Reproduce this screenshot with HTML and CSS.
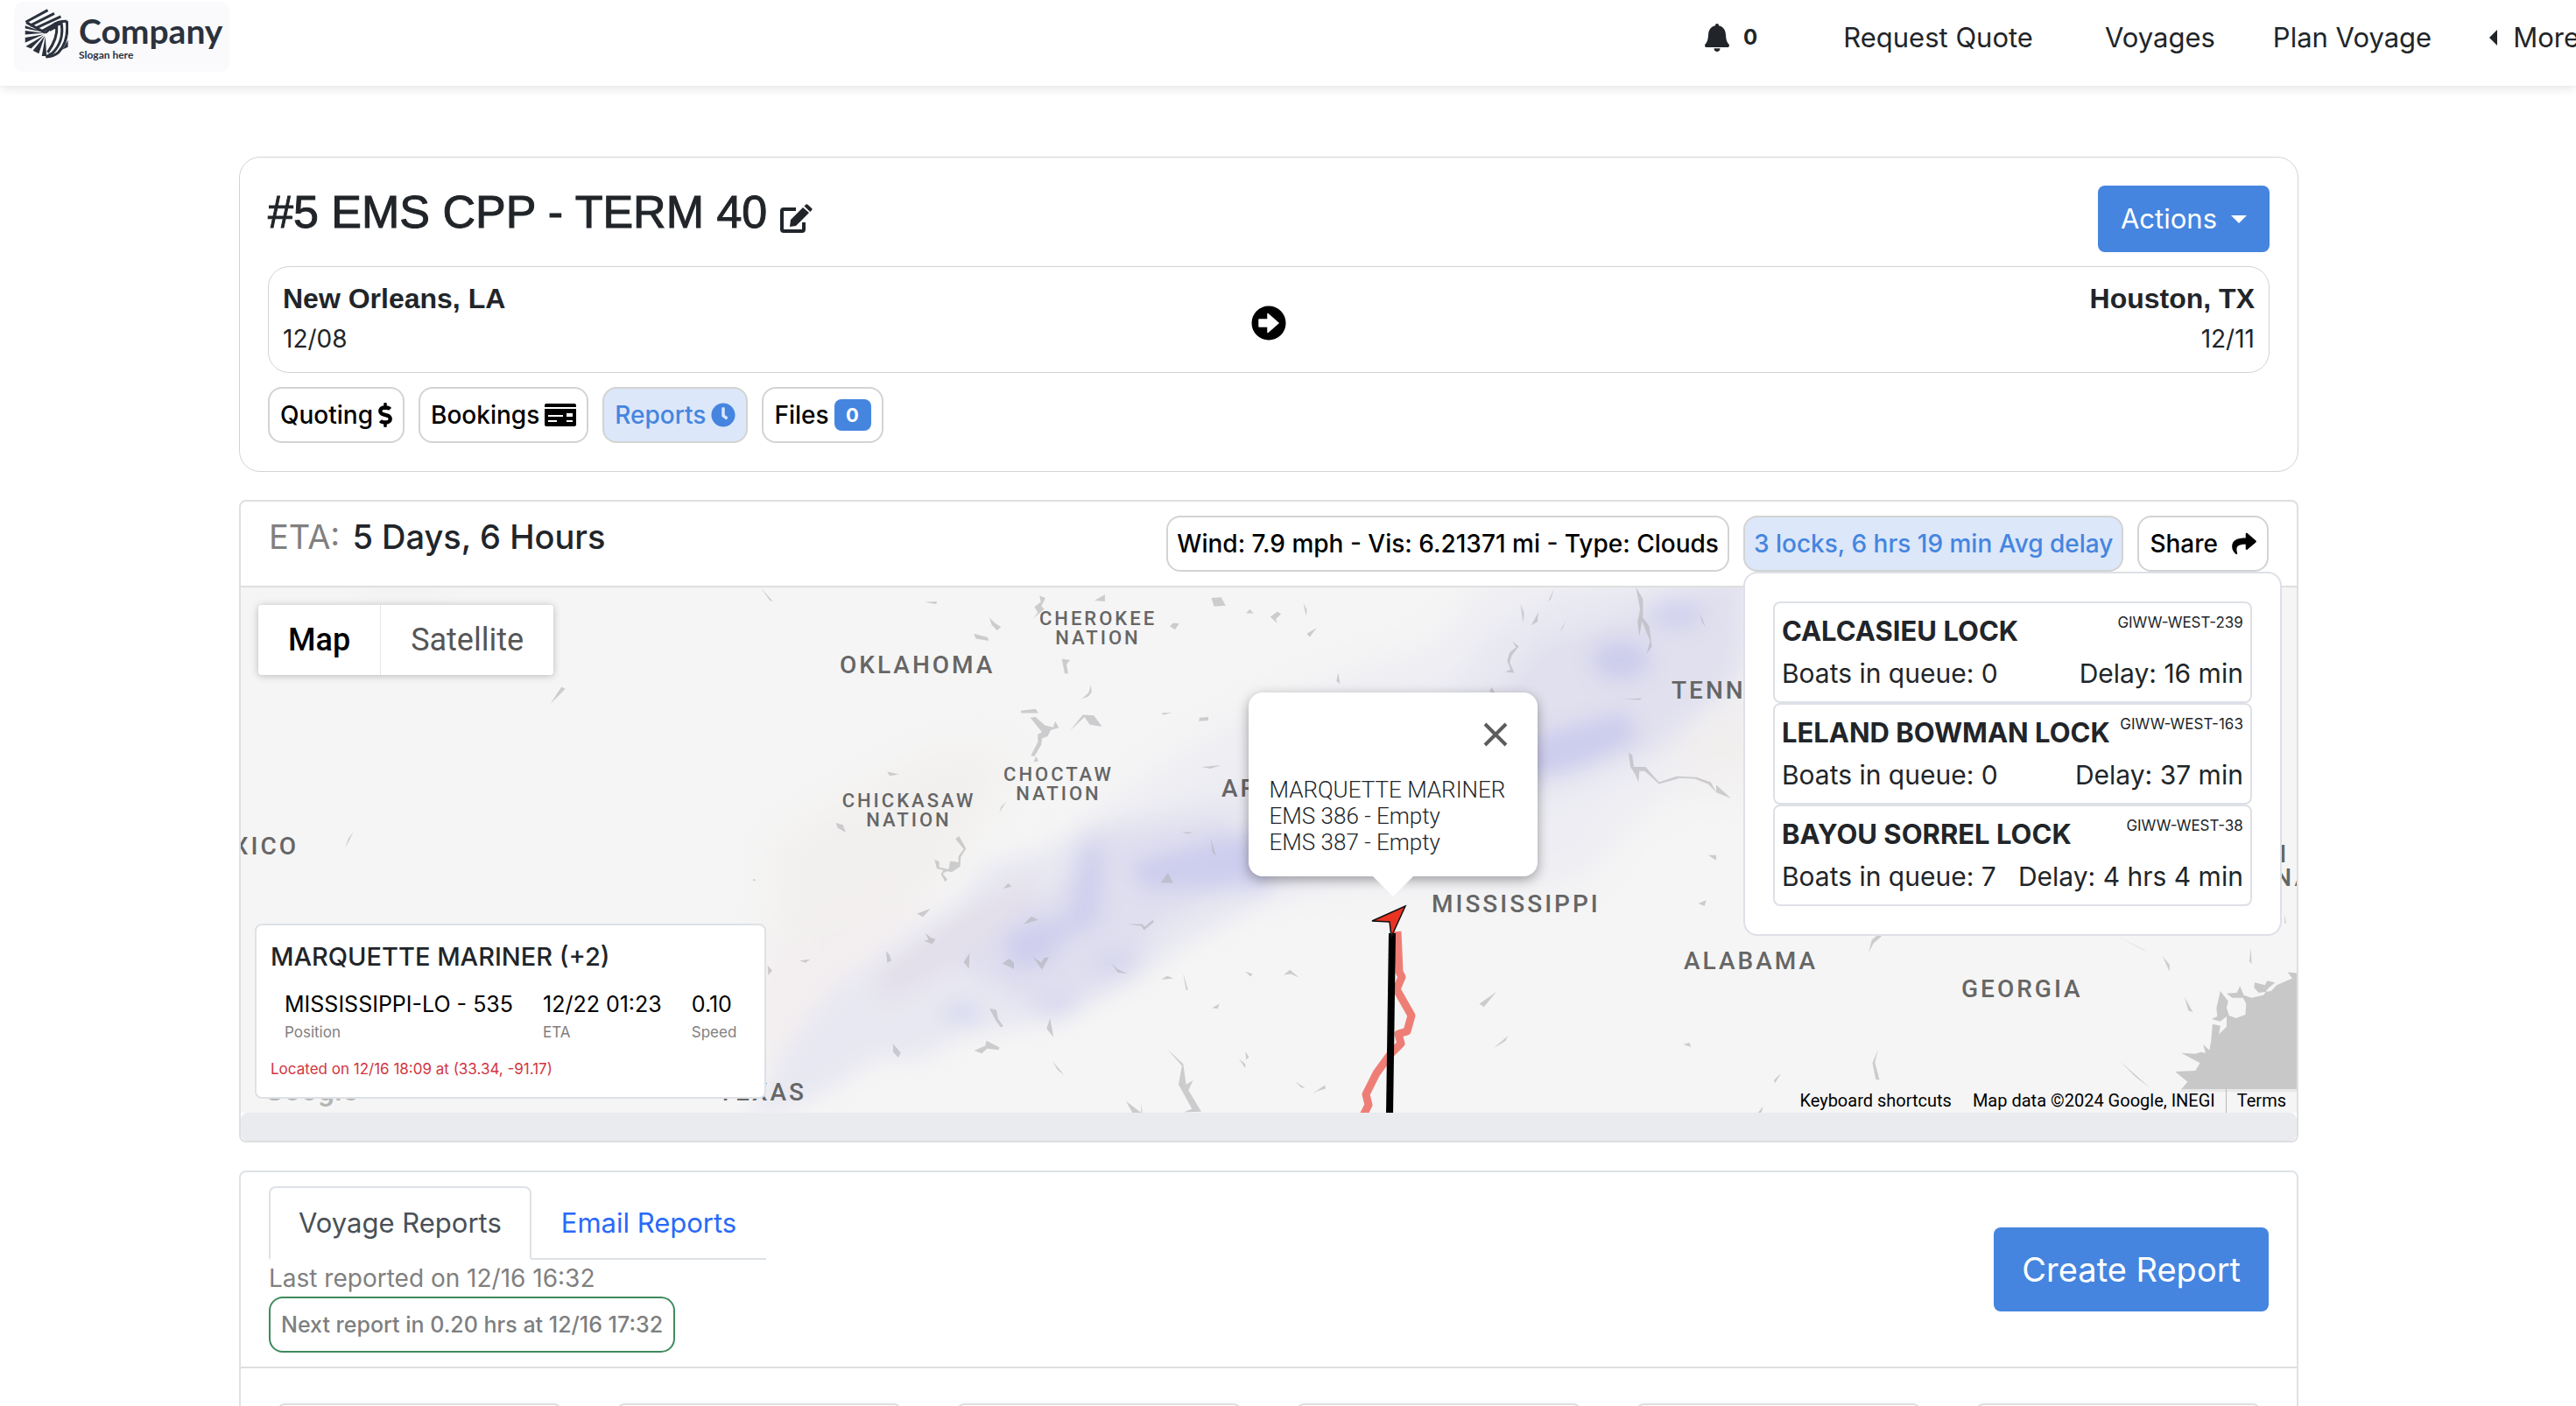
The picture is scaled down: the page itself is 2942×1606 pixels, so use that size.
FILE: index.html
```html
<!DOCTYPE html>
<html lang="en">
<head>
<meta charset="utf-8">
<meta name="viewport" content="width=device-width, initial-scale=1">
<title>#5 EMS CPP - TERM 40</title>
<link rel="stylesheet" href="styles.css">
</head>
<body>
<header class="topbar">
  <a class="brand" href="#" aria-label="Company">
    <svg class="brand-mark" viewBox="38 31 147 168" aria-hidden="true">
      <g fill="none" stroke="#2b323d" stroke-width="9">
        <path d="M42 76 116 36M44 77 108 112M56 88 138 47M74 97 160 57M94 108 130 88 Q150 72 180 73"/>
        <path d="M180 72 Q188 140 152 178 Q136 192 110 193"/>
        <path d="M108 112 Q136 84 162 80 Q172 140 132 180 L110 193"/>
        <path d="M122 103 Q136 94 146 92 Q150 130 116 178"/>
      </g>
      <g fill="#2b323d">
        <path d="M40 88 102 110 40 97zM40 105 102 113 40 118zM40 128 102 117 40 145zM42 158 104 120 60 165zM66 172 106 122 86 182zM96 190 108 124 112 190zM184 136V160L166 168z"/>
      </g>
    </svg>
    <span class="brand-text"><span class="brand-name">Company</span><span class="brand-slogan">Slogan here</span></span>
  </a>
  <nav class="nav" aria-label="Main">
    <a class="nav-bell" href="#" aria-label="Notifications">
      <svg width="28" height="32" viewBox="0 0 28 32" aria-hidden="true"><path fill="currentColor" d="M14 0c1.300 0 2 .9 2 2.300 5 1.200 7.500 4.700 7.900 9.700.5 6 .9 8.500 3.600 11.500.9 1.200.4 3.500-1.500 3.500H2c-1.900 0-2.400-2.300-1.500-3.500 2.700-3 3.100-5.500 3.600-11.500.4-5 2.900-8.500 7.900-9.700C12 .9 12.700 0 14 0zM10.500 28.200h7c0 2.200-1.500 3.800-3.500 3.800s-3.500-1.600-3.500-3.800z"/></svg>
      <span>0</span>
    </a>
    <a class="nav-quote" href="#">Request Quote</a>
    <a href="#">Voyages</a>
    <a href="#">Plan Voyage</a>
    <a class="nav-more" href="#">More</a>
  </nav>
</header>

<main class="page">
  <section class="voyage">
    <div class="voyage-head">
      <h1 class="voyage-title">#5 EMS CPP - TERM 40
        <svg width="37" height="33" viewBox="0 0 37 33" aria-hidden="true"><path fill="none" stroke="currentColor" stroke-width="4" stroke-linejoin="round" d="M18 6H4Q2 6 2 8V29Q2 31 4 31H25Q27 31 27 29V21"/><path fill="currentColor" d="M11 26 12 18 26 4 33 10 18 25zM27.500 2.500 29.500.6Q30.500 0 31.500.7L36.200 5Q37 6 36.200 7L34.300 9z"/></svg>
      </h1>
      <button class="btn btn-actions" type="button">Actions</button>
    </div>
    <div class="route">
      <div><div class="port">New Orleans, LA</div><div class="port-date">12/08</div></div>
      <svg class="route-arrow" width="40" height="40" viewBox="0 0 40 40" aria-hidden="true"><circle cx="20" cy="20" r="19.500"/><path fill="#fff" stroke="#fff" stroke-width="1.500" stroke-linejoin="round" d="M9 16H19V9.500L31 20 19 30.500V24H9z"/></svg>
      <div class="route-end"><div class="port">Houston, TX</div><div class="port-date">12/11</div></div>
    </div>
    <div class="chips">
      <button class="chip" type="button">Quoting
        <svg width="16" height="28" viewBox="0 0 288 512" aria-hidden="true"><path fill="currentColor" d="M209.200 233.400l-108-31.600C88.700 198.200 80 186.500 80 173.500c0-16.300 13.200-29.500 29.500-29.500h66.300c12.200 0 24.200 3.700 34.200 10.500 6.100 4.100 14.300 3.100 19.500-2l34.800-34c7.100-6.900 6.100-18.400-1.800-24.500C238 74.800 207.400 64.100 176 64V16c0-8.800-7.200-16-16-16h-32c-8.800 0-16 7.200-16 16v48h-2.500C45.800 64-5.400 118.700.5 183.600c4.200 46.100 39.400 83.600 83.800 96.600l102.500 30c12.500 3.700 21.200 15.300 21.200 28.300 0 16.300-13.200 29.500-29.500 29.500h-66.300C100 368 88 364.300 78 357.500c-6.100-4.100-14.300-3.100-19.500 2l-34.800 34c-7.100 6.900-6.100 18.400 1.800 24.500 24.500 19.200 55.100 29.900 86.500 30v48c0 8.800 7.200 16 16 16h32c8.800 0 16-7.200 16-16v-48.200c46.600-.9 90.300-28.600 105.700-72.700 21.500-61.600-14.600-124.800-72.500-141.700z"/></svg>
      </button>
      <button class="chip" type="button">Bookings
        <svg width="36" height="26" viewBox="0 0 36 26" aria-hidden="true"><path fill="currentColor" fill-rule="evenodd" d="M0 2Q0 0 2 0H34Q36 0 36 2V4H0zM0 6H36V24Q36 26 34 26H2Q0 26 0 24zM4 13V15H21V13zM4 19V21H14V19zM25 11V15H32V11zM25 19V21H32V19z"/></svg>
      </button>
      <button class="chip chip-active" type="button">Reports
        <svg width="28" height="28" viewBox="0 0 512 512" aria-hidden="true"><path fill="currentColor" d="M256,8C119,8,8,119,8,256S119,504,256,504,504,393,504,256,393,8,256,8Zm92.490,313h0l-20,25a16,16,0,0,1-22.490,2.500h0l-67-49.720a40,40,0,0,1-15-31.230V112a16,16,0,0,1,16-16h32a16,16,0,0,1,16,16V256l58,42.500A16,16,0,0,1,348.490,321Z"/></svg>
      </button>
      <button class="chip" type="button">Files <span class="badge">0</span></button>
    </div>
  </section>

  <section class="card">
    <div class="map-head">
      <h2 class="eta"><span class="eta-label">ETA:</span> 5 Days, 6 Hours</h2>
      <div class="map-tools">
        <button class="chip" type="button">Wind: 7.9 mph - Vis: 6.21371 mi - Type: Clouds</button>
        <div class="dropdown">
          <button class="chip chip-active" type="button" aria-expanded="true">3 locks, 6 hrs 19 min Avg delay</button>
          <div class="locks">
            <article class="lock">
              <div class="lock-row"><strong>CALCASIEU LOCK</strong><small>GIWW-WEST-239</small></div>
              <div class="lock-row"><span>Boats in queue: 0</span><span>Delay: 16 min</span></div>
            </article>
            <article class="lock">
              <div class="lock-row"><strong>LELAND BOWMAN LOCK</strong><small>GIWW-WEST-163</small></div>
              <div class="lock-row"><span>Boats in queue: 0</span><span>Delay: 37 min</span></div>
            </article>
            <article class="lock">
              <div class="lock-row"><strong>BAYOU SORREL LOCK</strong><small>GIWW-WEST-38</small></div>
              <div class="lock-row"><span>Boats in queue: 7</span><span>Delay: 4 hrs 4 min</span></div>
            </article>
          </div>
        </div>
        <button class="chip chip-share" type="button">Share
          <svg width="28" height="26" viewBox="0 16 512 480" aria-hidden="true"><path fill="currentColor" d="M503.691 189.836L327.687 37.851C312.281 24.546 288 35.347 288 56.015v80.053C127.371 137.907 0 170.100 0 322.326c0 61.441 39.581 122.309 83.333 154.132 13.653 9.931 33.111-2.533 28.077-18.631C66.066 312.814 132.917 274.316 288 272.085V360c0 20.700 24.300 31.453 39.687 18.164l176.004-152c11.071-9.562 11.086-26.753 0-36.328z"/></svg>
        </button>
      </div>
    </div>

    <div class="map">
      <svg class="map-canvas" viewBox="275 671 2348 600" preserveAspectRatio="xMidYMin slice" role="img" aria-label="Map of the southern United States">
        <defs>
          <filter id="soft" x="-30%" y="-30%" width="160%" height="160%"><feGaussianBlur stdDeviation="12"/></filter>
          <filter id="wide" x="-30%" y="-30%" width="160%" height="160%"><feGaussianBlur stdDeviation="24"/></filter>
        </defs>
        <rect x="275" y="671" width="2348" height="600" fill="#f5f5f5"/>
        <g filter="url(#wide)">
          <path fill="#f2f0ee" d="M880 960 1060 860 1160 850 1120 950 1030 1060 940 1180 880 1130z"/>
          <path fill="#f3eef0" d="M860 1090 980 1050 1080 1000 1040 1080 960 1150 920 1230 860 1230z"/>
          <ellipse cx="460" cy="680" rx="50" ry="12" fill="#f2eeee"/>
          <path fill="#ededf3" d="M1250 930 1400 830 1540 770 1640 740 1700 660 2010 640 2010 860 1880 920 1800 1010 1500 1010 1290 1040z"/>
          <path fill="#f1eeee" d="M1900 830 2020 790 2020 900 1920 900z"/>
        </g>
        <g filter="url(#soft)">
          <path fill="#e8e8f2" d="M850 1285 900 1194 950 1130 1010 1087 1093 1030 1130 985 1193 970 1240 940 1300 930 1390 910 1560 870 1650 800 1700 730 1780 680 1960 650 2010 740 1910 850 1840 890 1640 965 1460 1020 1345 1085 1300 1120 1210 1165 1100 1185 1050 1210 1000 1210 940 1250z"/>
          <path fill="#e0dfef" d="M1080 1090 1140 1060 1220 1000 1240 950 1400 930 1430 1000 1320 1060 1300 1105 1200 1165 1100 1110z"/>
          <path fill="#e3dfea" d="M1000 1110 1100 1040 1180 1000 1180 1030 1080 1110 1010 1150z"/>
          <path fill="#e1e0ee" d="M1700 800 1760 730 1860 700 2000 650 1980 780 1880 860 1760 890z"/>
          <ellipse cx="1208" cy="1148" rx="20" ry="14" fill="#d8d8ef"/>
          <ellipse cx="1273" cy="1099" rx="26" ry="11" fill="#d4d4ee"/>
          <ellipse cx="1098" cy="1156" rx="22" ry="10" fill="#d3d4ef"/>
          <path fill="#cfcfee" d="M1142 1072 1172 1054 1220 1046 1235 966 1262 966 1256 1054 1214 1074 1197 1102 1156 1110z"/>
          <path fill="#cdcdee" d="M1290 985 1400 955 1450 950 1450 1014 1305 1016z"/>
          <path fill="#cccced" d="M1735 862 1760 838 1858 812 1870 845 1802 878 1742 894z"/>
          <ellipse cx="1851" cy="754" rx="34" ry="23" fill="#cccced"/>
          <ellipse cx="1915" cy="702" rx="32" ry="17" fill="#d1d1ef"/>
        </g>
        <g fill="#b3b3b8" fill-opacity=".62">
          <path transform="translate(860 660) scale(.3333 .3954)" d="M26 28 68 68 58 66zM588 70 630 68 628 76zM810 115 828 130 850 142 836 152 818 136zM756 161 804 172 808 182 764 176zM982 52 1002 58 988 82 998 90 960 118 976 100 964 84 986 70zM1170 66 1206 48 1206 68zM1440 130 1460 132 1446 150 1428 140zM1058 234 1086 238 1074 250 1080 276 1068 276zM1158 310 1160 330 1150 342 1126 350 1150 332zM918 384 968 379 978 391 918 391zM950 404 968 402 1000 426 1028 432 1036 415 1048 433 1020 440 1010 458 990 464 988 482 964 516 952 514 976 474 976 452 990 446zM962 532 970 515 978 530zM1086 442 1130 396 1168 398 1196 430 1154 424 1136 402zM1400 390 1436 390 1406 396zM1530 404 1560 402 1560 412 1528 414zM460 560 500 568 468 572zM844 678 850 662 868 646zM284 708 308 714 318 736 290 722zM694 754 706 746 730 782 712 806 710 834 682 850 664 848 650 854 666 872 658 878 644 856 652 844 630 840 622 814 638 820 638 836 670 842 676 818 704 822 704 804 722 784zM0 870 12 873 0 876zM858 898 874 882 886 892zM562 970 608 956 582 980zM928 1000 954 978 978 988zM590 1026 610 1040 626 1044 614 1058 586 1048 602 1046zM456 1078 468 1090 474 1106 460 1112zM742 1084 740 1130 722 1110zM854 1114 878 1100 894 1112 894 1130zM958 1094 988 1112 996 1098 1014 1096 990 1132zM1226 1112 1248 1130 1284 1144 1250 1140zM1286 1000 1334 1000 1342 1008 1370 988 1374 994 1340 1018 1330 1006zM1398 880 1422 852 1440 882zM1468 734 1508 736 1490 740zM1398 1160 1420 1150 1440 1158zM1474 1142 1490 1190 1484 1192zM160 1106 196 1102 180 1112zM50 1120 66 1134 52 1148zM810 1244 834 1248 840 1274 858 1296 848 1298 830 1276zM1018 1272 1030 1328 1006 1302zM758 1366 796 1352 800 1337 844 1356 842 1364 802 1360 784 1374zM480 1346 506 1372 498 1386 480 1370zM1026 1396 1066 1436 1044 1422zM1420 1362 1474 1404 1484 1464 1508 1452 1492 1480 1536 1542 1476 1544 1504 1534 1478 1494 1458 1464 1470 1410zM1278 1512 1330 1545 1330 1516 1334 1545 1300 1545z"/>
          <path transform="translate(1160 560) scale(.5102 .4847)" d="M438 254 460 252 470 272 444 274zM516 290 524 280 532 290zM570 298 586 286 594 292 582 304 586 314zM644 266 652 282 650 296zM652 338 674 324 658 346zM718 450 722 430 726 456zM1130 268 1138 290 1136 314zM1154 318 1170 288 1168 310zM1218 332 1232 308 1224 326zM1192 262 1206 230 1198 256zM1388 228 1404 256 1404 300 1418 320 1424 368 1412 386 1420 356 1402 308 1396 344 1392 310 1398 280zM1532 290 1544 322 1536 310zM1112 356 1126 368 1110 390 1106 406 1116 430 1096 428 1108 422 1100 402 1106 382 1120 370zM1060 474 1066 464 1074 480zM1360 492 1400 490 1398 494zM1372 618 1380 624 1384 652 1410 652 1440 688 1480 674 1524 676 1556 688 1568 712 1550 692 1520 680 1486 678 1440 692 1408 662 1396 662 1394 688 1386 668 1376 652zM1550 860 1568 860 1568 872zM416 652 460 648 436 656zM1038 1210 1076 1182 1048 1218zM1070 1314 1102 1286 1096 1298zM1494 1306 1508 1302 1512 1312zM1528 974 1546 966 1542 980zM600 1142 614 1130 634 1148 616 1140zM514 1134 530 1140 526 1146zM440 1220 456 1210 452 1222zM500 1340 514 1352 514 1362zM514 1322 522 1336 516 1342zM626 1394 648 1408 640 1408zM664 1422 692 1402 694 1410 676 1416zM436 818 448 862 440 852z"/>
          <path transform="translate(1960 560) scale(.4464 .4847)" d="M0 694 38 726 0 712zM390 1090 398 1060 410 1050 424 1050 402 1068zM1024 1050 1102 1086 1090 1082zM1142 1098 1160 1118 1160 1134zM1364 1110 1368 1078 1370 1116zM1454 1020 1454 1000 1458 1020zM1198 1194 1220 1230 1208 1226zM414 1318 406 1348 418 1390 408 1388 400 1350zM148 1390 166 1374 150 1398zM1034 1346 1110 1408 1072 1382zM106 1468 120 1452 116 1466z"/>
          <path transform="translate(260 560) scale(.574 .3333)" d="M642 732 664 674 672 680zM234 1225 240 1195 250 1170 242 1200zM1026 1580 1052 1572 1034 1588z"/>
        </g>
        <path fill="#c8c8c8" transform="translate(1960 560) scale(.4464 .4847)" d="M1488 1138 1462 1136 1474 1150 1434 1166 1420 1180 1388 1184 1376 1172 1378 1160 1404 1166 1410 1156 1430 1160 1412 1174 1400 1190 1370 1196 1350 1190 1340 1168 1332 1184 1306 1186 1320 1196 1348 1196 1356 1210 1354 1236 1330 1244 1312 1238 1306 1220 1310 1204 1290 1180 1280 1220 1282 1240 1268 1246 1290 1252 1306 1240 1306 1264 1286 1282 1290 1262 1270 1258 1266 1300 1262 1320 1246 1306 1252 1326 1240 1324 1226 1328 1190 1326 1238 1350 1226 1368 1174 1370 1206 1394 1184 1418 1488 1418z"/>
        <g class="state">
          <text x="959" y="769">OKLAHOMA</text>
          <text x="1395" y="910">ARKANSAS</text>
          <text x="1635" y="1042">MISSISSIPPI</text>
          <text x="1909" y="798">TENNESSEE</text>
          <text x="1923" y="1107">ALABAMA</text>
          <text x="2240" y="1139">GEORGIA</text>
          <text x="341" y="976" text-anchor="end">NEW MEXICO</text>
          <text x="921" y="1257" text-anchor="end">TEXAS</text>
          <text x="2614" y="985" text-anchor="end">SOUTH</text>
          <text x="2642" y="1012" text-anchor="end">CAROLINA</text>
        </g>
        <g class="nation">
          <text x="1254" y="714">CHEROKEE</text><text x="1254" y="736">NATION</text>
          <text x="1209" y="892">CHOCTAW</text><text x="1209" y="914">NATION</text>
          <text x="1038" y="922">CHICKASAW</text><text x="1038" y="944">NATION</text>
        </g>
        <text class="map-logo" x="301" y="1257">Google</text>
        <path fill="none" stroke="#ee7e75" stroke-width="9" stroke-linejoin="round" d="M1596 1064 1598 1110 1601 1116 1595 1130 1612 1160 1607 1178 1597 1181 1600 1192 1588 1204 1572 1226 1560 1250 1563 1262 1557 1274"/>
        <path fill="none" stroke="#000" stroke-width="8" d="M1590 1066 1587 1274"/>
        <path fill="#ea3323" stroke="#111" stroke-width="1.500" d="M1605 1035 1567 1052 1587 1053 1589 1070z"/>
      </svg>

      <div class="map-types">
        <button class="map-type map-type-on" type="button">Map</button>
        <button class="map-type" type="button">Satellite</button>
      </div>

      <div class="bubble">
        <button class="bubble-close" type="button" aria-label="Close"><svg width="28" height="28" viewBox="0 0 28 28" aria-hidden="true"><path fill="none" stroke="#5c5c5c" stroke-width="4" d="M2 2 26 26M26 2 2 26"/></svg></button>
        <div>MARQUETTE MARINER</div>
        <div>EMS 386 - Empty</div>
        <div>EMS 387 - Empty</div>
      </div>

      <aside class="vessel">
        <h3 class="vessel-name">MARQUETTE MARINER (+2)</h3>
        <dl class="facts">
          <div><dd>MISSISSIPPI-LO - 535</dd><dt>Position</dt></div>
          <div><dd>12/22 01:23</dd><dt>ETA</dt></div>
          <div><dd>0.10</dd><dt>Speed</dt></div>
        </dl>
        <p class="located">Located on 12/16 18:09 at (33.34, -91.17)</p>
      </aside>

      <div class="credits">
        <button type="button">Keyboard shortcuts</button>
        <span>Map data ©2024 Google, INEGI</span>
        <a href="#">Terms</a>
      </div>
    </div>
    <div class="map-foot"></div>
  </section>

  <section class="card reports">
    <div class="reports-head">
      <div class="reports-info">
        <div class="tabs">
          <a class="tab tab-on" href="#">Voyage Reports</a>
          <a class="tab" href="#">Email Reports</a>
        </div>
        <p class="last">Last reported on 12/16 16:32</p>
        <div class="next">Next report in 0.20 hrs at 12/16 17:32</div>
      </div>
      <button class="btn btn-create" type="button">Create Report</button>
    </div>
    <div class="stats">
      <div class="stat"></div><div class="stat"></div><div class="stat"></div>
      <div class="stat"></div><div class="stat"></div><div class="stat"></div>
    </div>
  </section>
</main>
</body>
</html>
```
FILE: styles.css
```css
* { box-sizing: border-box; }

body {
  margin: 0;
  height: 100vh;
  overflow: hidden;
  background: #fff;
  color: #212529;
  font: 400 31px/48px Inter, "Liberation Sans", sans-serif;
}

h1, h2, h3, p, dl, dd { margin: 0; }
a { color: inherit; text-decoration: none; }
button { font: inherit; cursor: pointer; }
svg { flex: none; }

/* Top bar */
.topbar {
  display: flex;
  align-items: flex-start;
  justify-content: space-between;
  height: 98px;
  padding: 2px 0 0 16px;
  box-shadow: 0 2px 12px rgba(0, 0, 0, .12);
}
.brand {
  display: flex;
  align-items: flex-start;
  gap: 12px;
  width: 246px;
  height: 80px;
  padding: 8px 12px;
  border-radius: 10px;
  background: #fafafc;
  color: #2b323d;
}
.brand-mark { width: 50px; height: 57px; }
.brand-text { display: flex; flex-direction: column; padding-top: 4px; }
.brand-name { font: 700 39px/42px Lato, sans-serif; }
.brand-slogan { font: 700 12px/14px Lato, sans-serif; }
.nav {
  display: flex;
  align-items: center;
  gap: 66px;
  height: 82px;
  margin-right: -4px;
  white-space: nowrap;
}
.nav-bell { display: flex; align-items: center; gap: 16px; font-size: 24px; font-weight: 700; }
.nav-quote { padding: 0 16px 0 32px; }
.nav-more { display: flex; align-items: center; gap: 18px; }
.nav-more::before {
  content: "";
  border: 9px solid transparent;
  border-right-color: currentColor;
  border-left-width: 0;
}

/* Page */
.page {
  display: flex;
  flex-direction: column;
  gap: 32px;
  padding: 81px 317px 0 273px;
}

.btn {
  border: 0;
  border-radius: 8px;
  background: #4585df;
  color: #fff;
}
.chip {
  display: flex;
  align-items: center;
  gap: 6px;
  height: 64px;
  padding: 0 10px;
  border: 2px solid #d3d3d3;
  border-radius: 16px;
  background: #fff;
  color: #000;
  font-size: 28px;
  font-weight: 500;
  white-space: nowrap;
}
.chip-active { background: #dce7f9; color: #4585df; }
.badge {
  min-width: 42px;
  padding: 0 8px;
  border-radius: 8px;
  background: #4585df;
  color: #fff;
  font-size: 22px;
  font-weight: 700;
  line-height: 36px;
  text-align: center;
}

/* Voyage summary */
.voyage {
  display: flex;
  flex-direction: column;
  gap: 16px;
  padding: 32px;
  border: 1px solid #d3d3d3;
  border-radius: 24px;
}
.voyage-head { display: flex; justify-content: space-between; }
.voyage-title {
  font: 400 52px/60px "Liberation Sans", Arial, sans-serif;
  -webkit-text-stroke: 1px currentColor;
}
.voyage-title svg { vertical-align: -6px; }
.btn-actions { display: flex; align-items: center; gap: 16px; height: 76px; padding: 0 26px; }
.btn-actions::after {
  content: "";
  border: 9px solid transparent;
  border-top-color: currentColor;
  border-bottom-width: 0;
}
.route {
  display: flex;
  align-items: center;
  justify-content: space-between;
  padding: 12px 16px 16px;
  border: 1px solid #d3d3d3;
  border-radius: 24px;
}
.route > div { flex: 1; }
.route-arrow { margin-top: 12px; }
.route-end { text-align: right; }
.port { font-family: "Liberation Sans", Arial, sans-serif; font-size: 32px; font-weight: 700; }
.port-date { font-size: 28px; line-height: 44px; }
.chips { display: flex; gap: 16px; }
.chips .chip { padding: 0 12px; }

/* Map card */
.card { border: 2px solid #dedfe1; border-radius: 8px; }
.map-head {
  display: flex;
  justify-content: space-between;
  padding: 16px 32px;
  border-bottom: 2px solid #dedede;
}
.eta { font-size: 38px; font-weight: 500; line-height: 48px; }
.eta-label { margin-right: 4px; color: #808080; font-weight: 400; }
.map-tools { display: flex; gap: 16px; }
.map-tools .chip-share { gap: 16px; padding: 0 12px; }
.dropdown { position: relative; }
.locks {
  position: absolute;
  z-index: 2;
  top: 100%;
  left: 0;
  width: 615px;
  padding: 32px;
  border: 2px solid #dee0e7;
  border-radius: 16px;
  background: #fff;
}
.lock {
  padding: 8px;
  border: 2px solid #dee0e7;
  border-radius: 8px;
}
.lock-row { display: flex; justify-content: space-between; white-space: nowrap; }
.lock-row span { font-size: 30px; }
.lock-row small { font-size: 17px; line-height: 28px; }

.map { position: relative; height: 600px; overflow: hidden; }
.map-canvas { display: block; width: 100%; height: 100%; }
.state, .nation { fill: #666; font-family: Roboto, sans-serif; font-weight: 500; }
.state { font-size: 28px; letter-spacing: 3px; }
.nation { font-size: 22px; letter-spacing: 3px; text-anchor: middle; }
.map-logo { fill: #b5b5b5; font: 500 34px Roboto, sans-serif; }

.map-types {
  position: absolute;
  top: 20px;
  left: 20px;
  display: flex;
  border-radius: 4px;
  background: #fff;
  box-shadow: 0 1px 8px rgba(0, 0, 0, .25);
}
.map-type {
  height: 80px;
  padding: 0 34px;
  border: 0;
  background: none;
  color: #565656;
  font: 400 36px/80px Roboto, sans-serif;
}
.map-type-on { border-right: 1px solid #e6e6e6; color: #000; font-weight: 500; }

.bubble {
  position: absolute;
  top: 120px;
  left: 49%;
  width: 330px;
  height: 210px;
  padding: 96px 24px 0;
  border-radius: 16px;
  background: #fff;
  box-shadow: 0 4px 14px rgba(0, 0, 0, .35);
  font: 300 26px/30px Roboto, sans-serif;
  white-space: nowrap;
}
.bubble::after {
  content: "";
  position: absolute;
  top: 100%;
  left: 50%;
  margin-left: -23px;
  border: 23px solid transparent;
  border-top-color: #fff;
  border-bottom-width: 0;
}
.bubble-close {
  position: absolute;
  top: 34px;
  right: 34px;
  display: flex;
  padding: 0;
  border: 0;
  background: none;
}

.vessel {
  position: absolute;
  bottom: 16px;
  left: 16px;
  padding: 16px 16px 20px;
  border: 2px solid #dee2e6;
  border-radius: 8px;
  background: #fff;
  white-space: nowrap;
}
.vessel-name { font-size: 29px; font-weight: 500; line-height: 40px; }
.facts { display: flex; gap: 34px; padding: 16px 16px 0; color: #000; }
.facts > div { display: flex; flex-direction: column; }
.facts dd { font-size: 25px; line-height: 36px; }
.facts dt { color: #808080; font-size: 17px; line-height: 28px; }
.located { margin-top: 16px; color: #d1353f; font-size: 17px; line-height: 24px; }

.credits {
  position: absolute;
  right: 0;
  bottom: 0;
  display: flex;
  background: rgba(245, 245, 245, .7);
  color: #000;
  font: 400 20px/27px Roboto, sans-serif;
}
.credits > * { padding: 0 12px; border: 0; background: none; font: inherit; }
.credits a { border-left: 1px solid #b9b9b9; }
.map-foot { height: 32px; border-radius: 8px; background: #eaebef; }

/* Reports card */
.reports { border-color: #dee2e6; }
.reports-head {
  display: flex;
  align-items: center;
  justify-content: space-between;
  padding: 16px 32px;
  border-bottom: 2px solid #dedede;
}
.reports-info { display: flex; flex-direction: column; align-items: flex-start; }
.tabs { display: flex; border-bottom: 2px solid #dee2e6; }
.tab {
  margin-bottom: -2px;
  padding: 16px 32px;
  border: 2px solid transparent;
  border-radius: 8px 8px 0 0;
  color: #2969f8;
}
.tab-on { border-color: #dee2e6 #dee2e6 #fff; background: #fff; color: #495057; }
.last { color: #808080; font-size: 28px; line-height: 42px; }
.next {
  padding: 0 12px;
  border: 2px solid #3f8a5d;
  border-radius: 16px;
  color: #7d7f81;
  font-size: 25px;
  font-weight: 500;
  line-height: 60px;
}
.btn-create { height: 96px; padding: 0 32px; font-size: 38px; }
.stats { display: grid; grid-template-columns: repeat(6, 1fr); gap: 64px; padding: 40px 42px; }
.stat { height: 160px; border: 2px solid #dedede; border-radius: 8px; }
```
